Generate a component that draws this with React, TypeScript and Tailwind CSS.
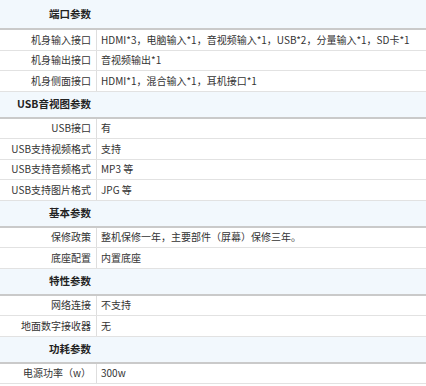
const sections: { title: string; rows: [string, string][]; first?: boolean }[] = [
  {
    title: '端口参数',
    first: true,
    rows: [
      ['机身输入接口', 'HDMI*3，电脑输入*1，音视频输入*1，USB*2，分量输入*1，SD卡*1'],
      ['机身输出接口', '音视频输出*1'],
      ['机身侧面接口', 'HDMI*1，混合输入*1，耳机接口*1'],
    ],
  },
  {
    title: 'USB音视图参数',
    rows: [
      ['USB接口', '有'],
      ['USB支持视频格式', '支持'],
      ['USB支持音频格式', 'MP3 等'],
      ['USB支持图片格式', 'JPG 等'],
    ],
  },
  {
    title: '基本参数',
    rows: [
      ['保修政策', '整机保修一年，主要部件（屏幕）保修三年。'],
      ['底座配置', '内置底座'],
    ],
  },
  {
    title: '特性参数',
    rows: [
      ['网络连接', '不支持'],
      ['地面数字接收器', '无'],
    ],
  },
  {
    title: '功耗参数',
    rows: [['电源功率（w）', '300w']],
  },
]

export default function App() {
  return (
    <div
      className="w-[426px] h-[386px] overflow-hidden bg-white text-[#333]"
      style={{ fontFamily: '"Noto Sans CJK SC", "Noto Sans", sans-serif' }}
    >
      {sections.map((s) => (
        <div key={s.title}>
          <div
            className={`${s.first ? 'h-[30px]' : 'h-[27px]'} flex items-center bg-[#f2f8fd] border-b-2 border-[#cacaca]`}
          >
            <div className="w-[97px] pr-[6px] text-right text-[10.5px] font-bold leading-none text-[#222] whitespace-nowrap">
              {s.title}
            </div>
          </div>
          {s.rows.map(([k, v]) => (
            <div key={k} className="h-[20.5px] flex border-b border-[#e2e2e2]">
              <div className="w-[97px] shrink-0 pr-[5px] flex items-center justify-end text-[10px] leading-none border-r border-[#dedede] whitespace-nowrap">
                {k}
              </div>
              <div className="pl-[4px] flex items-center text-[10px] leading-none whitespace-nowrap">
                {v}
              </div>
            </div>
          ))}
        </div>
      ))}
    </div>
  )
}
